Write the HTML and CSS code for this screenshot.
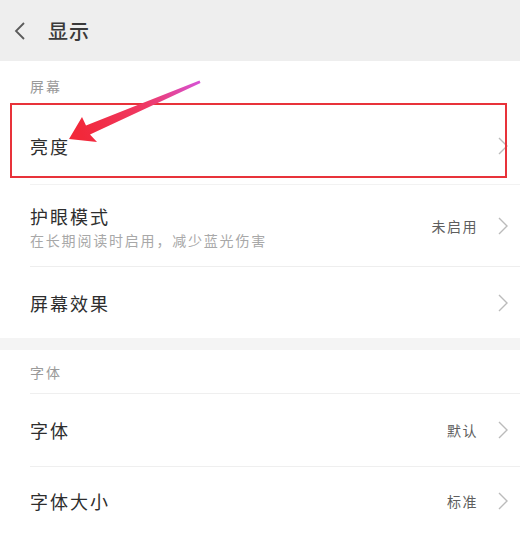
FILE: index.html
```html
<!DOCTYPE html>
<html lang="zh-CN">
<head>
<meta charset="utf-8">
<title>显示</title>
<link rel="stylesheet" href="styles.css">
</head>
<body>
<div class="screen">
  <header class="topbar">
    <svg class="back" width="14" height="20" viewBox="0 0 14 20"><path d="M11 2 L3 10 L11 18" fill="none" stroke="#5a5a5a" stroke-width="1.8"/></svg>
    <span class="title">显示</span>
  </header>

  <div class="label label-first">屏幕</div>
  <div class="row row-bright">
    <span class="row-title">亮度</span>
    <span class="right"><svg class="chev" width="10" height="18" viewBox="0 0 10 18"><path d="M1 1 L9 9 L1 17" fill="none" stroke="#bbb" stroke-width="1.4"/></svg></span>
  </div>
  <div class="row row-eye">
    <div class="stack">
      <span class="row-title">护眼模式</span>
      <span class="sub">在长期阅读时启用，减少蓝光伤害</span>
    </div>
    <span class="right"><span class="value">未启用</span><svg class="chev" width="10" height="18" viewBox="0 0 10 18"><path d="M1 1 L9 9 L1 17" fill="none" stroke="#bbb" stroke-width="1.4"/></svg></span>
  </div>
  <div class="row row-effect">
    <span class="row-title">屏幕效果</span>
    <span class="right"><svg class="chev" width="10" height="18" viewBox="0 0 10 18"><path d="M1 1 L9 9 L1 17" fill="none" stroke="#bbb" stroke-width="1.4"/></svg></span>
  </div>

  <div class="gap"></div>

  <div class="label label-second">字体</div>
  <div class="row row-font">
    <span class="row-title">字体</span>
    <span class="right"><span class="value">默认</span><svg class="chev" width="10" height="18" viewBox="0 0 10 18"><path d="M1 1 L9 9 L1 17" fill="none" stroke="#bbb" stroke-width="1.4"/></svg></span>
  </div>
  <div class="row row-size">
    <span class="row-title">字体大小</span>
    <span class="right"><span class="value">标准</span><svg class="chev" width="10" height="18" viewBox="0 0 10 18"><path d="M1 1 L9 9 L1 17" fill="none" stroke="#bbb" stroke-width="1.4"/></svg></span>
  </div>

  <div class="highlight"></div>
  <svg class="arrow" width="520" height="200" viewBox="0 0 520 200">
    <defs>
      <linearGradient id="ag" x1="80" y1="130" x2="200" y2="82" gradientUnits="userSpaceOnUse">
        <stop offset="0" stop-color="#f2283a"/>
        <stop offset="0.55" stop-color="#ef3a66"/>
        <stop offset="1" stop-color="#d652d6"/>
      </linearGradient>
    </defs>
    <polygon points="69,139 82,117 86,125.5 199.5,80.5 200.5,83 90,134.5 97,142" fill="url(#ag)"/>
  </svg>
</div>
</body>
</html>
```

FILE: styles.css
```css
html, body {
  margin: 0;
  padding: 0;
  background: #ffffff;
}

.screen {
  position: relative;
  width: 520px;
  height: 536px;
  overflow: hidden;
  display: flex;
  flex-direction: column;
  font-family: "Noto Sans CJK SC", "Noto Sans", sans-serif;
  color: #333;
}

.topbar {
  height: 61px;
  flex: none;
  background: #eeeeee;
  display: flex;
  align-items: center;
  padding-left: 13px;
  gap: 21px;
}

.back {
  display: block;
}

.title {
  font-size: 20px;
  font-weight: 500;
  letter-spacing: 1px;
  color: #3a3a3a;
  line-height: 24px;
}

.label {
  flex: none;
  padding-left: 30px;
  font-size: 14px;
  letter-spacing: 2px;
  color: #9a9a9a;
  line-height: 20px;
  box-sizing: border-box;
}

.label-first {
  height: 46px;
  padding-top: 15px;
}

.label-second {
  height: 44px;
  padding-top: 12px;
  border-bottom: 1px solid #efefef;
  margin-left: 30px;
  padding-left: 0;
}

.row {
  flex: none;
  display: flex;
  align-items: center;
  justify-content: space-between;
  padding: 0 12px 0 30px;
  box-sizing: border-box;
}

.row-title {
  font-size: 18px;
  font-weight: 400;
  letter-spacing: 2px;
  line-height: 24px;
  color: #2e2e2e;
}

.row-bright {
  height: 77px;
}

.row-eye {
  height: 83px;
  border-top: 1px solid #f2f2f2;
  border-bottom: 1px solid #eeeeee;
  margin-left: 30px;
  padding-left: 0;
}

.stack {
  display: flex;
  flex-direction: column;
  gap: 3px;
  padding-top: 2px;
}

.sub {
  font-size: 14px;
  letter-spacing: 1.8px;
  line-height: 18px;
  color: #a8a8a8;
}

.row-effect {
  height: 71px;
}

.gap {
  flex: none;
  height: 12px;
  background: #f4f4f4;
}

.row-font {
  height: 73px;
  border-bottom: 1px solid #efefef;
  margin-left: 30px;
  padding-left: 0;
}

.row-size {
  height: 68px;
}

.right {
  display: flex;
  align-items: center;
  gap: 20px;
}

.value {
  font-size: 14px;
  letter-spacing: 1.5px;
  color: #5e5e5e;
  line-height: 20px;
}

.chev {
  display: block;
}

.highlight {
  position: absolute;
  left: 10px;
  top: 103px;
  width: 497px;
  height: 75px;
  border: 2px solid #e8323a;
  box-sizing: border-box;
}

.arrow {
  position: absolute;
  left: 0;
  top: 0;
}
```
